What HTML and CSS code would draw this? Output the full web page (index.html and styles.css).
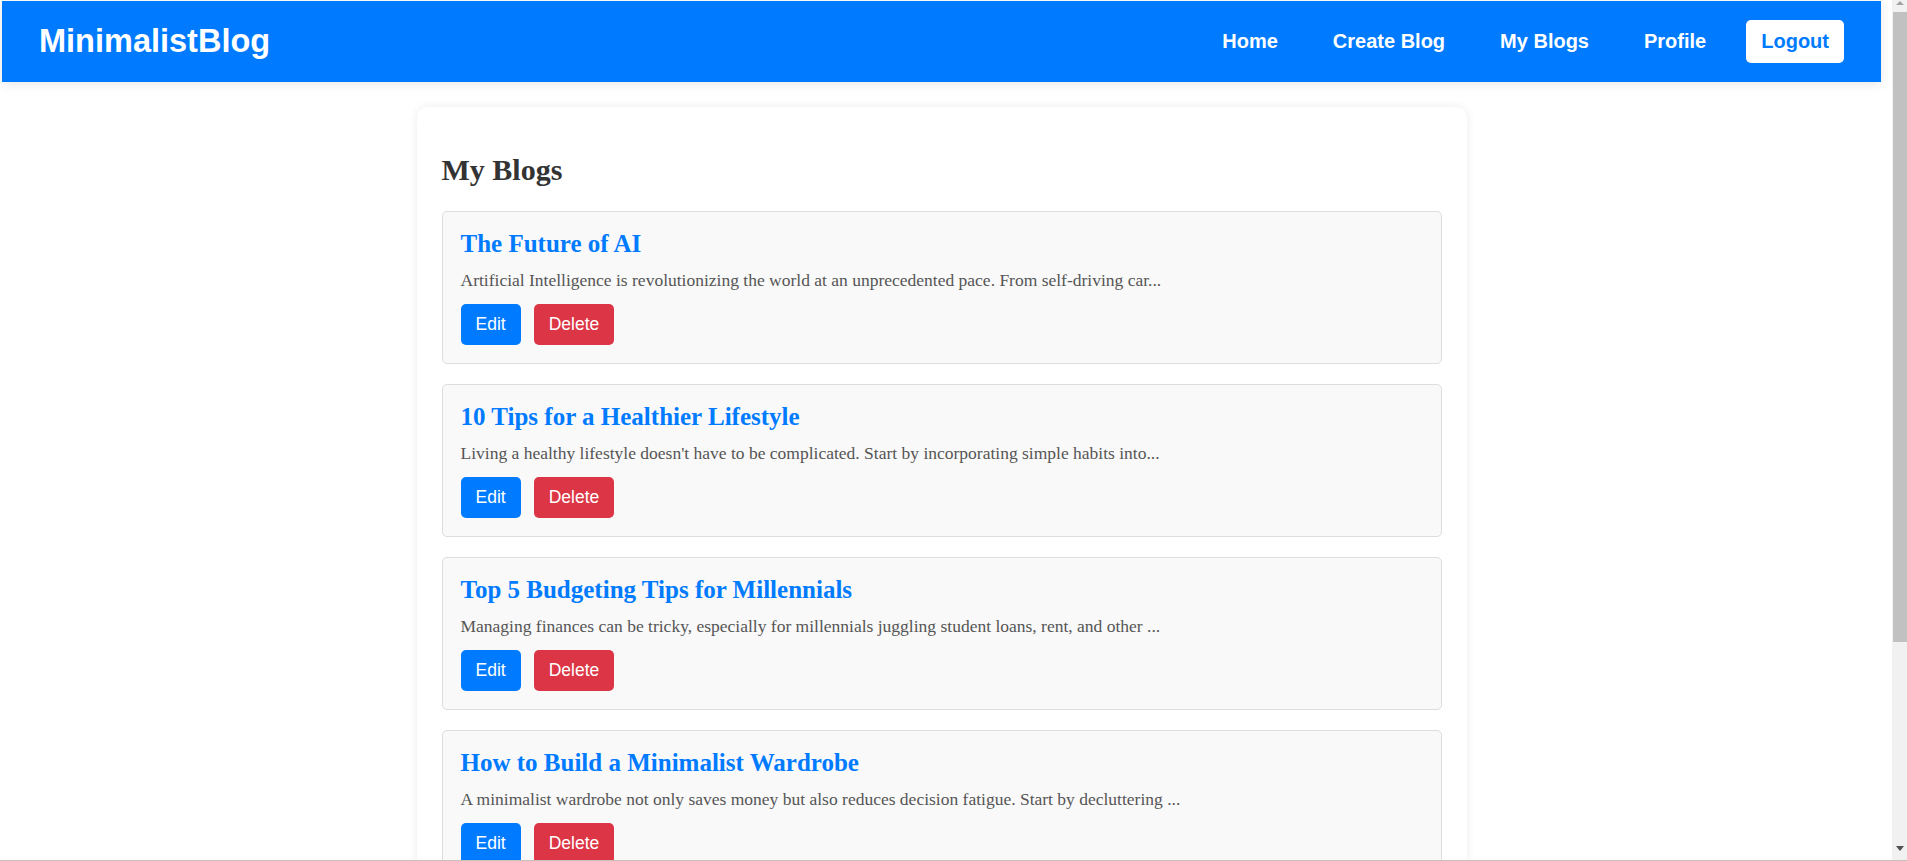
FILE: index.html
```html
<!DOCTYPE html>
<html lang="en">
<head>
<meta charset="utf-8">
<title>My Blogs - MinimalistBlog</title>
<link rel="stylesheet" href="styles.css">
</head>
<body>
<div class="page">
  <header class="navbar">
    <a class="logo" href="#">MinimalistBlog</a>
    <nav class="nav-links">
      <a class="nav-link" href="#">Home</a>
      <a class="nav-link" href="#">Create Blog</a>
      <a class="nav-link" href="#">My Blogs</a>
      <a class="nav-link" href="#">Profile</a>
      <a class="nav-link logout" href="#">Logout</a>
    </nav>
  </header>

  <main class="container">
    <h2 class="page-title">My Blogs</h2>
    <div class="blog-list">
      <article class="blog-card">
        <h3 class="blog-title">The Future of AI</h3>
        <p class="blog-excerpt">Artificial Intelligence is revolutionizing the world at an unprecedented pace. From self-driving car...</p>
        <div class="actions">
          <button class="btn btn-edit">Edit</button>
          <button class="btn btn-delete">Delete</button>
        </div>
      </article>
      <article class="blog-card">
        <h3 class="blog-title">10 Tips for a Healthier Lifestyle</h3>
        <p class="blog-excerpt">Living a healthy lifestyle doesn't have to be complicated. Start by incorporating simple habits into...</p>
        <div class="actions">
          <button class="btn btn-edit">Edit</button>
          <button class="btn btn-delete">Delete</button>
        </div>
      </article>
      <article class="blog-card">
        <h3 class="blog-title">Top 5 Budgeting Tips for Millennials</h3>
        <p class="blog-excerpt">Managing finances can be tricky, especially for millennials juggling student loans, rent, and other ...</p>
        <div class="actions">
          <button class="btn btn-edit">Edit</button>
          <button class="btn btn-delete">Delete</button>
        </div>
      </article>
      <article class="blog-card">
        <h3 class="blog-title">How to Build a Minimalist Wardrobe</h3>
        <p class="blog-excerpt">A minimalist wardrobe not only saves money but also reduces decision fatigue. Start by decluttering ...</p>
        <div class="actions">
          <button class="btn btn-edit">Edit</button>
          <button class="btn btn-delete">Delete</button>
        </div>
      </article>
    </div>
  </main>
</div>

<div class="scrollbar" aria-hidden="true">
  <div class="sb-arrow sb-up"></div>
  <div class="sb-track">
    <div class="sb-thumb"></div>
  </div>
  <div class="sb-arrow sb-down"></div>
</div>
<div class="window-edge" aria-hidden="true"></div>
</body>
</html>
```

FILE: styles.css
```css
html, body {
  margin: 0;
  padding: 0;
  background: #ffffff;
}

body {
  font-family: "Liberation Serif", "Times New Roman", serif;
  color: #333333;
}

.page {
  width: 1879px;
  margin: 1px 0 0 2px;
}

.navbar {
  display: flex;
  align-items: center;
  justify-content: space-between;
  background: #007bff;
  padding: 19px 37px 19px 37px;
  box-shadow: 0 2px 10px rgba(0, 0, 0, 0.1);
}

.logo {
  font-family: "Liberation Sans", Arial, sans-serif;
  font-size: 32.5px;
  font-weight: bold;
  color: #ffffff;
  text-decoration: none;
}

.nav-links {
  display: flex;
  align-items: center;
  gap: 25px;
}

.nav-link {
  font-family: "Liberation Sans", Arial, sans-serif;
  font-size: 20px;
  font-weight: bold;
  line-height: 23px;
  color: #ffffff;
  text-decoration: none;
  padding: 10px 15px;
  border-radius: 5px;
}

.nav-link.logout {
  background: #ffffff;
  color: #007bff;
}

.container {
  width: 1050px;
  box-sizing: border-box;
  margin: 25px auto 0;
  padding: 25px;
  background: #ffffff;
  border-radius: 10px;
  box-shadow: 0 0 10px rgba(0, 0, 0, 0.08);
}

.page-title {
  font-size: 30px;
  font-weight: bold;
  line-height: 34px;
  margin: 21px 0 24px;
  color: #333333;
}

.blog-list {
  display: flex;
  flex-direction: column;
  gap: 20px;
}

.blog-card {
  background: #f9f9f9;
  border: 1px solid #dddddd;
  border-radius: 5px;
  padding: 18px;
}

.blog-title {
  font-size: 25px;
  font-weight: bold;
  line-height: 27px;
  color: #007bff;
  margin: 0 0 13px;
}

.blog-excerpt {
  font-size: 17.5px;
  color: #555555;
  margin: 0 0 13px;
}

.actions {
  display: flex;
  gap: 13px;
}

.btn {
  font-family: "Liberation Sans", Arial, sans-serif;
  font-size: 17.5px;
  line-height: 21px;
  color: #ffffff;
  border: none;
  border-radius: 5px;
  padding: 10px 15px;
  cursor: pointer;
}

.btn-edit {
  background: #007bff;
}

.btn-delete {
  background: #dc3545;
}

/* Browser scrollbar as it appears in the capture */
.scrollbar {
  position: fixed;
  top: 0;
  right: 0;
  width: 15px;
  height: 860px;
  background: #f1f1f1;
  display: flex;
  flex-direction: column;
}

.sb-arrow {
  height: 12px;
  display: flex;
  justify-content: center;
}

.sb-up {
  align-items: flex-start;
  padding-top: 1px;
  box-sizing: border-box;
}

.sb-up::before {
  content: "";
  border-left: 4px solid transparent;
  border-right: 4px solid transparent;
  border-bottom: 4px solid #a3a3a3;
}

.sb-down {
  height: 20px;
  align-items: flex-start;
  padding-top: 6px;
  box-sizing: border-box;
}

.sb-down::before {
  content: "";
  border-left: 4.5px solid transparent;
  border-right: 4.5px solid transparent;
  border-top: 5px solid #505050;
}

.sb-track {
  flex: 1;
  display: flex;
  justify-content: flex-end;
}

.sb-thumb {
  width: 14px;
  height: 630px;
  background: #c1c1c1;
}

.window-edge {
  position: fixed;
  left: 0;
  right: 0;
  bottom: 0;
  height: 1px;
  background: #c9bfb6;
}
```
